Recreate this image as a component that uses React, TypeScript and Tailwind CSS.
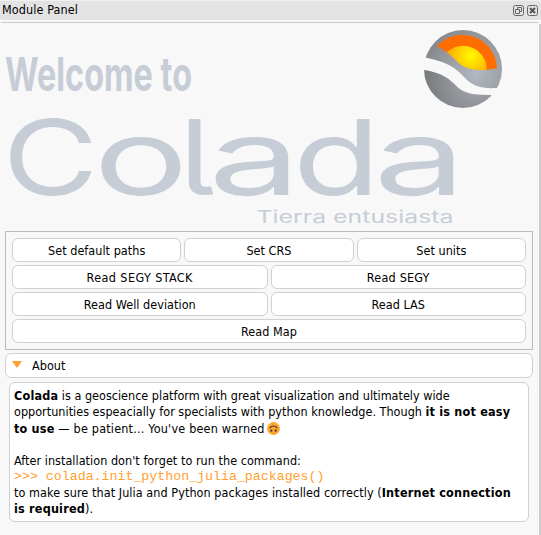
import React from "react";

const uiFont = "font-['DejaVu_Sans_Condensed','DejaVu_Sans',sans-serif] [font-stretch:condensed]";

function PanelButton({ children }: { children: React.ReactNode }) {
  return (
    <button className="h-6 min-w-0 flex-1 rounded-md border border-[#d0d0d0] bg-white pt-px text-center leading-[22px]">
      {children}
    </button>
  );
}

function Strong({ children }: { children: React.ReactNode }) {
  return <b className="tracking-[0.2px]">{children}</b>;
}

function TitleBar() {
  return (
    <header className="flex h-5 items-center justify-between border-t border-[#f0f0f0] bg-[#e3e3e3] pr-[3px] pl-[2px]">
      <span className="tracking-[0.1px]">Module Panel</span>
      <span className="flex gap-[3px]">
        <svg width="11" height="11" viewBox="0 0 11 11" fill="none" stroke="#666">
          <rect x=".5" y=".5" width="10" height="10" rx="2" />
          <path d="M4.5 4V2.5h4v4H7M2.5 4.5h4v4h-4z" />
        </svg>
        <svg width="11" height="11" viewBox="0 0 11 11" fill="none" stroke="#666">
          <rect x=".5" y=".5" width="10" height="10" rx="2" />
          <path d="M3 3l5 5M8 3L3 8" stroke="#555" strokeWidth="2" />
        </svg>
      </span>
    </header>
  );
}

function Banner() {
  return (
    <svg className="block" width="539" height="207" viewBox="0 24 539 207">
      <defs>
        <radialGradient id="upper" gradientUnits="userSpaceOnUse" cx="230" cy="220" r="160">
          <stop offset="0" stopColor="#b3b8c1" />
          <stop offset="1" stopColor="#85888b" />
        </radialGradient>
        <radialGradient id="lower" gradientUnits="userSpaceOnUse" cx="225" cy="245" r="160">
          <stop offset="0" stopColor="#a6aab0" />
          <stop offset="1" stopColor="#75787a" />
        </radialGradient>
        <radialGradient id="sun" gradientUnits="userSpaceOnUse" cx="212" cy="168" r="66">
          <stop offset="0" stopColor="#fffb00" />
          <stop offset="1" stopColor="#ffae00" />
        </radialGradient>
        <clipPath id="disc">
          <circle cx="189" cy="207" r="117" />
        </clipPath>
      </defs>
      <g fill="#c6cdd6" fontFamily="Inter, sans-serif">
        <text x="5" y="91" fontSize="47" fontWeight="700" textLength="187" lengthAdjust="spacingAndGlyphs">
          Welcome to
        </text>
        <text
          className="[font-feature-settings:'cv05']"
          transform="translate(0 194.5) scale(1.25 1)"
          y="0"
          fontSize="105"
          fontWeight="400"
        >
          <tspan x="2">C</tspan>
          <tspan x="74.8" textLength="76" lengthAdjust="spacingAndGlyphs">o</tspan>
          <tspan x="143">l</tspan>
          <tspan x="166.8" textLength="74" lengthAdjust="spacingAndGlyphs">a</tspan>
          <tspan x="234.4" textLength="70" lengthAdjust="spacingAndGlyphs">d</tspan>
          <tspan x="298.8" textLength="74" lengthAdjust="spacingAndGlyphs">a</tspan>
        </text>
        <text x="256.5" y="222.5" fontSize="17" textLength="197" lengthAdjust="spacingAndGlyphs">
          Tierra entusiasta
        </text>
      </g>
      <g transform="translate(400 0) scale(.33333)">
        <g clipPath="url(#disc)">
          <path fill="url(#upper)" d="M60 170L78 173C125 183 160 194 190 229C218 261 245 266 290 264H320V80H60Z" />
          <path fill="url(#lower)" d="M60 208L72 210C112 216 140 228 164 253C188 280 214 285 273 285V330H60Z" />
        </g>
        <path fill="#ff6d00" d="M111 139A103 103 0 0 1 291 205Q275 209 258 209L140 157Q126 146 111 139Z" />
        <path fill="url(#sun)" d="M140 157A71 71 0 0 1 260 209C220 212 196 207 174 187C162 176 153 166 140 157Z" />
      </g>
    </svg>
  );
}

function UpsideDownFace() {
  return (
    <svg className="ml-[2px] inline-block align-[-2px]" width="13" height="13" viewBox="0 0 13 13" fill="none">
      <circle cx="6.5" cy="6.5" r="6.4" fill="#ffa62b" />
      <path d="M2.6 6.2Q6.5 1.8 10.4 6.2" stroke="#4a3b3b" strokeWidth="1.2" />
      <circle cx="4.3" cy="8.7" r="1.1" fill="#40364a" />
      <circle cx="8.7" cy="8.7" r="1.1" fill="#40364a" />
    </svg>
  );
}

export default function App() {
  return (
    <div className={`flex h-[535px] w-[541px] flex-col overflow-hidden bg-[#f8f8f8] text-[12.5px] tracking-[0.04px] text-black ${uiFont}`}>
      <TitleBar />
      <div className="mt-[2px] mr-[3px] ml-px h-px shrink-0 bg-[#cbcbcb]" />
      <main className="mt-px flex-1 border-r-2 border-[#cdcdcd]">
        <Banner />
        <section className="mr-[6px] ml-[5px] flex h-[119px] flex-col gap-[3px] border border-[#bcbcbc] p-[6px]">
          <div className="flex gap-[3px]">
            <PanelButton>Set default paths</PanelButton>
            <PanelButton>Set CRS</PanelButton>
            <PanelButton>Set units</PanelButton>
          </div>
          <div className="flex gap-[3px]">
            <PanelButton><span className="tracking-[0.4px]">Read SEGY STACK</span></PanelButton>
            <PanelButton><span className="tracking-[0.2px]">Read SEGY</span></PanelButton>
          </div>
          <div className="flex gap-[3px]">
            <PanelButton>Read Well deviation</PanelButton>
            <PanelButton>Read LAS</PanelButton>
          </div>
          <div className="flex">
            <PanelButton>Read Map</PanelButton>
          </div>
        </section>
        <button className="mt-[3px] mr-[6px] ml-[5px] flex h-[25px] w-[528px] items-center rounded-md border border-[#d0d0d0] bg-white pl-[6px]">
          <svg className="mb-[3px]" width="10" height="7" viewBox="0 0 10 7">
            <path d="M0 0h10L5 7z" fill="#ffa02f" />
          </svg>
          <span className="ml-[10px] pt-px">About</span>
        </button>
        <article className="mt-1 ml-[9px] h-[140px] w-[520px] rounded-md border border-[#d0d0d0] bg-white pt-[5px] pl-1 leading-4 whitespace-nowrap">
          <p className="tracking-[0.01px]"><Strong>Colada</Strong> is a geoscience platform with great visualization and ultimately wide</p>
          <p className="tracking-[0.02px]">opportunities espeacially for specialists with python knowledge. Though <Strong>it is not easy</Strong></p>
          <p className="h-[17px] leading-[17px] tracking-[0.2px]"><Strong>to use</Strong> — be patient... You've been warned<UpsideDownFace /></p>
          <p className="mt-4">After installation don't forget to run the command:</p>
          <p className="font-['Liberation_Mono',monospace] text-[13.27px] tracking-normal text-[#ffa02f]">&gt;&gt;&gt; colada.init_python_julia_packages()</p>
          <p className="tracking-[0.07px]">to make sure that Julia and Python packages installed correctly (<Strong>Internet connection</Strong></p>
          <p><Strong>is required</Strong>).</p>
        </article>
      </main>
    </div>
  );
}
